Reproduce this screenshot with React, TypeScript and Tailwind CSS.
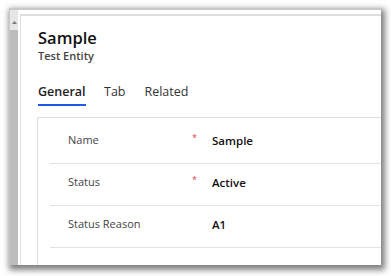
const font = { fontFamily: '"Segoe UI", "Open Sans", "Noto Sans", sans-serif' };

const fields = [
  { label: "Name", value: "Sample", required: true },
  { label: "Status", value: "Active", required: true },
  { label: "Status Reason", value: "A1", required: false },
];

function Row({ label, value, required }: { label: string; value: string; required: boolean }) {
  return (
    <div className="flex h-[42px] border-b border-[#e3e3e3] pl-[18px] pt-[10px]">
      <div className="w-[124px] text-[11px] leading-[16px] text-[#444]">{label}</div>
      <div className="w-[20px] pt-[1px] text-[9px] leading-[10px] text-[#e2454f]">{required ? "*" : ""}</div>
      <div className="pt-[1px] text-[11.5px] font-semibold leading-[16px] text-[#111]">{value}</div>
    </div>
  );
}

export default function App() {
  return (
    <div className="h-[276px] w-[391px] overflow-hidden bg-white pl-[9px] pt-[8px]" style={font}>
      <div className="flex h-[257px] w-[372px] overflow-hidden border-l border-t-2 border-[#c8c8c8] bg-white shadow-[2px_3px_6px_2px_rgba(0,0,0,0.5)]">
        {/* scrollbar */}
        <div className="flex w-[8px] flex-col bg-[#e6e6e6]">
          <div className="flex h-[20px] items-end justify-center pb-[6px]">
            <svg width="5" height="3" viewBox="0 0 5 3">
              <path d="M0 3 L2.5 0 L5 3 Z" fill="#7a7a7a" />
            </svg>
          </div>
          <div className="flex-1 bg-[#bcbcbc]" />
        </div>
        <div className="w-[2px]" />
        <div className="mt-[4px] flex flex-1 flex-col border-l border-t-2 border-[#dedede] pl-[17px] pt-[11px]">
          <div className="text-[16.5px] font-semibold leading-[22px] text-[#111]">Sample</div>
          <div className="text-[11px] font-semibold leading-[14px] text-[#444]">Test Entity</div>
          <div className="mt-[20px] flex text-[12.5px] leading-[18px] text-[#333]">
            <div className="flex flex-col">
              <span className="font-semibold text-[#222]">General</span>
              <div className="mt-[3px] h-[2px] w-[48px] bg-[#1e5ae6]" />
            </div>
            <span className="ml-[18px]">Tab</span>
            <span className="ml-[19px]">Related</span>
          </div>
          <div className="-ml-px mt-[11px] flex-1 border-l border-t border-[#dedede] pl-[12px] pt-[4px]">
            {fields.map((f) => (
              <Row key={f.label} {...f} />
            ))}
          </div>
        </div>
      </div>
    </div>
  );
}
